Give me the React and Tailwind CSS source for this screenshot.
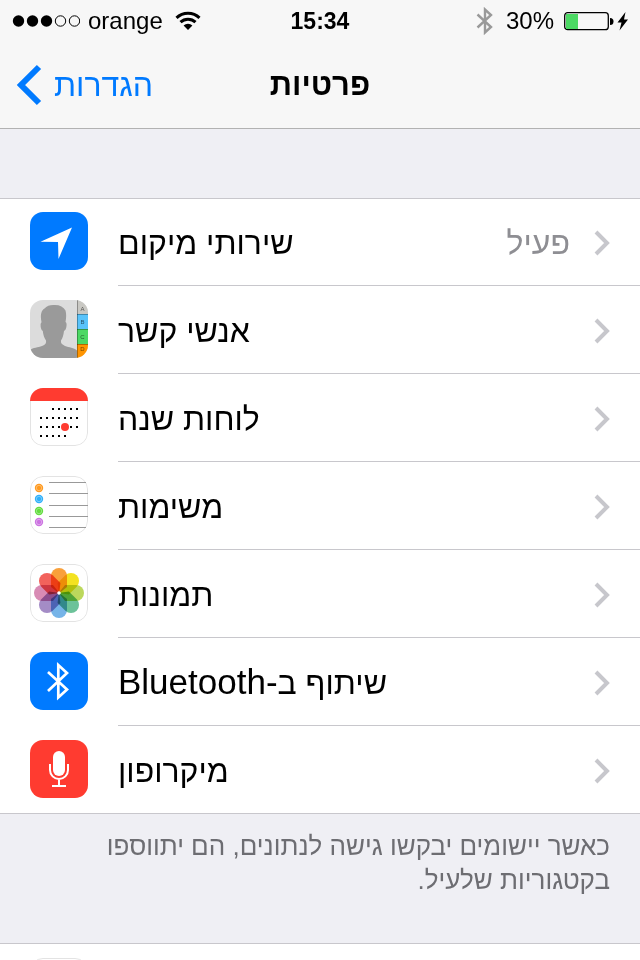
import React from "react";

/////////////
// app icons, all on a 58 x 58 grid

const LocationIcon = () => (
  <svg viewBox="0 0 58 58" className="h-full w-full bg-[#007aff]">
    <path d="M42 15.500 L28.500 47 L28 30 L10.500 29.800 Z" fill="#fff" />
  </svg>
);

const ContactsIcon = () => (
  <svg viewBox="0 0 58 58" className="h-full w-full bg-[#dcdcdc]">
    <path
      d="M0 50 C3 47.500 8 47.500 12 46 C15.500 44.700 16.500 43 16 40.500 C14 37.500 13.200 34.500 12.800 31 C11 30 10.500 27 10.600 24.500 C10.700 23 11.500 22.500 11.500 22 C10 14 11.500 10.500 14.500 8.500 C17 5.500 21 4.500 25 5 C30 5 33.500 7 35.500 10.500 C36.500 14 36.300 18 35.500 22 C36.500 22.500 36.800 24 36.500 26 C36.200 28.500 35.500 30.500 34 31 C33.500 35 32.800 38 31 40.500 C30.500 43 32 44.500 35 46 C39 47.500 44 47.500 47 50.500 V58 H0 Z"
      fill="#9a9a9a"
    />
    <rect x="47" y="0" width="11" height="14" fill="#c9c8c3" />
    <rect x="47" y="14" width="11" height="15" fill="#5ac3fa" />
    <rect x="47" y="29" width="11" height="15" fill="#4cd964" />
    <rect x="47" y="44" width="11" height="14" fill="#ff9500" />
    <path
      d="M47 14.500 H58 M47 29.500 H58 M47 44.500 H58 M47.500 0 V58"
      stroke="#000"
      strokeOpacity="0.3"
    />
    <g
      fill="#000"
      fillOpacity="0.6"
      fontSize="6"
      fontFamily="Liberation Sans, sans-serif"
      textAnchor="middle"
    >
      <text x="52.500" y="11">A</text>
      <text x="52.500" y="24">B</text>
      <text x="52.500" y="39">C</text>
      <text x="52.500" y="51">D</text>
    </g>
  </svg>
);

const calendarDots = [
  { y: 20, xs: [22, 28, 34, 40, 46] },
  { y: 29, xs: [10, 16, 22, 28, 34, 40, 46] },
  { y: 38, xs: [10, 16, 22, 28, 40, 46] },
  { y: 47, xs: [10, 16, 22, 28, 34] },
];

const CalendarIcon = () => (
  <svg viewBox="0 0 58 58" className="h-full w-full bg-white">
    <IconEdge />
    <rect width="58" height="13" fill="#ff3b30" />
    {calendarDots.map(({ y, xs }) =>
      xs.map((x) => <rect key={`${x}-${y}`} x={x} y={y} width="2" height="2" />)
    )}
    <circle cx="35" cy="39" r="4" fill="#ff3b30" />
  </svg>
);

const IconEdge = () => (
  <rect
    x="0.5"
    y="0.5"
    width="57"
    height="57"
    rx="12.500"
    fill="none"
    stroke="#e3e3e3"
  />
);

const reminderDots = [
  { y: 12, color: "#ff9a1f" },
  { y: 23, color: "#2fb0fa" },
  { y: 35, color: "#63dc3f" },
  { y: 46, color: "#cc73e1" },
];

const RemindersIcon = () => (
  <svg viewBox="0 0 58 58" className="h-full w-full bg-white">
    <IconEdge />
    {reminderDots.map(({ y, color }) => (
      <g key={y}>
        <circle cx="9" cy={y} r="4.200" fill={color} />
        <circle
          cx="9"
          cy={y}
          r="2.700"
          fill="none"
          stroke="#fff"
          strokeWidth="0.7"
          strokeOpacity="0.5"
        />
      </g>
    ))}
    <path
      d="M19 6.500 H56 M19 17.500 H58 M19 29.500 H58 M19 40.500 H58 M19 51.500 H56"
      stroke="#999"
    />
  </svg>
);

const petals = [
  "#f9a03a",
  "#f3e221",
  "#bcd85c",
  "#6cc299",
  "#76b4e8",
  "#a48cc6",
  "#d88bb4",
  "#f2625c",
];

const PhotosIcon = () => (
  <svg viewBox="0 0 58 58" className="h-full w-full bg-white">
    <IconEdge />
    {petals.map((color, i) => (
      <path
        key={color}
        d="M21 12 A8 8 0 0 1 37 12 V23 L30 28.500 H28 L21 23 Z"
        fill={color}
        transform={`rotate(${i * 45} 29 29)`}
        className="mix-blend-multiply"
      />
    ))}
    <circle cx="29" cy="29" r="1.800" fill="#fff" />
  </svg>
);

const BluetoothIcon = () => (
  <svg viewBox="0 0 58 58" className="h-full w-full bg-[#007aff]">
    <path
      d="M18 20 L37 37.500 L28.300 45.500 V13 L37 21 L18 39"
      fill="none"
      stroke="#fff"
      strokeWidth="2.700"
    />
  </svg>
);

const MicIcon = () => (
  <svg viewBox="0 0 58 58" className="h-full w-full bg-[#ff3b30]">
    <rect x="23" y="11" width="12" height="25" rx="6" fill="#fff" />
    <path
      d="M20 24 V30 A9 9 0 0 0 38 30 V24 M29 39 V46 M22 46 H36"
      fill="none"
      stroke="#fff"
      strokeWidth="2"
    />
  </svg>
);

const Chevron = () => (
  <svg viewBox="0 0 16 26" className="h-[26px] w-4 shrink-0" fill="none">
    <path d="M2 2 L13 13 L2 24" stroke="#c7c7cc" strokeWidth="4" />
  </svg>
);

/////////////
// status bar

const StatusBar = () => (
  <div className="grid h-10 grid-cols-[1fr_auto_1fr] items-center px-3 pt-0.5 text-[24px] leading-[38px]">
    <div className="flex items-center gap-2">
      <svg viewBox="0 0 68 12" className="h-3 w-[68px]">
        <circle cx="6.500" cy="6" r="5.700" />
        <circle cx="20.500" cy="6" r="5.700" />
        <circle cx="34.500" cy="6" r="5.700" />
        <circle cx="48.500" cy="6" r="5.200" fill="none" stroke="#000" />
        <circle cx="62.500" cy="6" r="5.200" fill="none" stroke="#000" />
      </svg>
      <span>orange</span>
      <svg viewBox="0 0 26 20" className="ml-1 h-5 w-[26px]" fill="none">
        <path d="M1.500 6.800 A16.500 16.500 0 0 1 24.500 6.800" stroke="#000" strokeWidth="3" />
        <path d="M5.500 11.200 A10.800 10.800 0 0 1 20.500 11.200" stroke="#000" strokeWidth="3" />
        <path d="M13 19 L8.600 14.600 A6.200 6.200 0 0 1 17.400 14.600 Z" fill="#000" />
      </svg>
    </div>
    <span className="text-[23px] font-bold">15:34</span>
    <div className="flex items-center justify-end">
      <svg viewBox="0 0 18 28" className="mr-3 h-7 w-[18px]" fill="none">
        <path
          d="M1.500 7.500 L15 20 L9 25.500 V2.500 L15 8 L1.500 20.500"
          stroke="#999"
          strokeWidth="2.400"
        />
      </svg>
      <span className="mr-2.5">30%</span>
      <svg viewBox="0 0 64 20" className="h-5 w-16">
        <rect x="0.700" y="1.700" width="43.600" height="17" rx="3" fill="none" stroke="#000" strokeWidth="1.300" />
        <rect x="2" y="3" width="12" height="15" fill="#4cd964" />
        <path d="M46 7 A3.200 3.200 0 0 1 46 14 Z" />
        <path d="M61.500 1 L53.500 11.500 H57.500 L55.500 19.500 L64 8.500 H60 Z" />
      </svg>
    </div>
  </div>
);

const NavBar = () => (
  <nav className="grid h-22 grid-cols-[1fr_auto_1fr] items-center px-4 pt-0.5">
    <a href="#settings" className="flex items-center gap-3 text-[32px] text-[#007aff]">
      <svg viewBox="0 0 26 42" className="h-[42px] w-[26px]" fill="none">
        <path d="M23 3 L5 21 L23 39" stroke="#007aff" strokeWidth="6" />
      </svg>
      <span dir="rtl">הגדרות</span>
    </a>
    <h1 dir="rtl" className="text-[31px] font-bold">
      פרטיות
    </h1>
  </nav>
);

/////////////
//
const items = [
  { id: "location", label: "שירותי מיקום", value: "פעיל", Icon: LocationIcon },
  { id: "contacts", label: "אנשי קשר", Icon: ContactsIcon },
  { id: "calendars", label: "לוחות שנה", Icon: CalendarIcon },
  { id: "reminders", label: "משימות", Icon: RemindersIcon },
  { id: "photos", label: "תמונות", Icon: PhotosIcon },
  { id: "bluetooth", label: "שיתוף ב", latin: "-Bluetooth", Icon: BluetoothIcon },
  { id: "microphone", label: "מיקרופון", Icon: MicIcon },
];

const Row = ({ item }) => {
  const { id, label, latin, value, Icon } = item;
  return (
    <li className="group h-22 border-[#c8c7cc] first:border-t last:border-b">
      <a href={`#${id}`} className="flex h-full items-start gap-[30px] pl-[30px]">
        <div className="mt-[14px] h-[58px] w-[58px] shrink-0 overflow-hidden rounded-[13px] group-first:mt-[13px]">
          <Icon />
        </div>
        <div className="flex flex-1 items-center self-stretch border-b border-[#c8c7cc] pt-0.5 pr-[30px] group-last:border-b-0">
          <span dir="rtl" className="text-[32px]">
            {label}
            {latin && <span className="text-[35px] leading-none">{latin}</span>}
          </span>
          <span dir="rtl" className="mr-6 ml-auto text-[32px] text-[#8e8e93]">
            {value}
          </span>
          <Chevron />
        </div>
      </a>
    </li>
  );
};

const App = () => {
  return (
    <div className="h-screen overflow-hidden bg-[#efeff4] font-['Liberation_Sans','Open_Sans',sans-serif] text-black">
      <header className="border-b border-[#b2b2b2] bg-[#f7f7f7]">
        <StatusBar />
        <NavBar />
      </header>
      <main>
        <ul className="mt-[69px] bg-white">
          {items.map((item) => (
            <Row key={item.id} item={item} />
          ))}
        </ul>
        <p dir="rtl" className="px-[30px] pt-[15px] pb-[46px] text-[26px] leading-[34px] text-[#6d6d72]">
          כאשר יישומים יבקשו גישה לנתונים, הם יתווספו בקטגוריות שלעיל.
        </p>
        <section className="border-t border-[#c8c7cc] bg-white px-[30px] py-[14px]">
          <div className="h-[58px] w-[58px] rounded-[13px] border border-[#e3e3e3]" />
        </section>
      </main>
    </div>
  );
};

export default App;
